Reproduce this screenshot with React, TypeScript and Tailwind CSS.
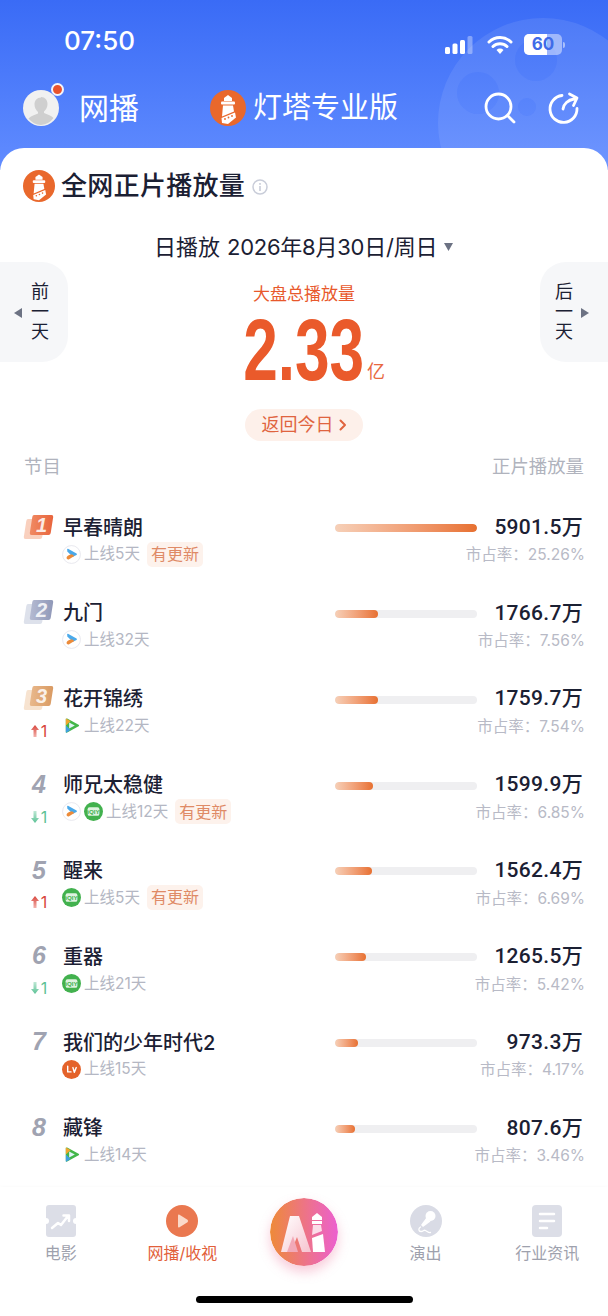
const rows = [
  { name: '早春晴朗', platforms: ['youku'], days: '上线5天', fresh: true, value: '5901.5万', share: '市占率：25.26%', bar: 100, rank: 1, change: '' },
  { name: '九门', platforms: ['youku'], days: '上线32天', fresh: false, value: '1766.7万', share: '市占率：7.56%', bar: 30, rank: 2, change: '' },
  { name: '花开锦绣', platforms: ['tencent'], days: '上线22天', fresh: false, value: '1759.7万', share: '市占率：7.54%', bar: 30, rank: 3, change: 'up' },
  { name: '师兄太稳健', platforms: ['youku', 'iqiyi'], days: '上线12天', fresh: true, value: '1599.9万', share: '市占率：6.85%', bar: 27, rank: 4, change: 'down' },
  { name: '醒来', platforms: ['iqiyi'], days: '上线5天', fresh: true, value: '1562.4万', share: '市占率：6.69%', bar: 26, rank: 5, change: 'up' },
  { name: '重器', platforms: ['iqiyi'], days: '上线21天', fresh: false, value: '1265.5万', share: '市占率：5.42%', bar: 22, rank: 6, change: 'down' },
  { name: '我们的少年时代2', platforms: ['mango'], days: '上线15天', fresh: false, value: '973.3万', share: '市占率：4.17%', bar: 16, rank: 7, change: '' },
  { name: '藏锋', platforms: ['tencent'], days: '上线14天', fresh: false, value: '807.6万', share: '市占率：3.46%', bar: 14, rank: 8, change: '' },
]

const badgeColors: Record<number, [string, string, string]> = {
  1: ['#f7c4ae', '#f08a63', '#e8643c'],
  2: ['#d5d9e6', '#b5bbd2', '#9098b8'],
  3: ['#f5dcc4', '#e9b98d', '#d99a62'],
}

function LighthouseLogo({ size }: { size: number }) {
  return (
    <svg width={size} height={size} viewBox="0 0 36 36" className="shrink-0">
      <circle cx="18" cy="18" r="18" fill="#e9682c" />
      <path d="M18 5l4 3v3h-8V8z" fill="#fff" />
      <rect x="11" y="11.500" width="14" height="3" rx="1" fill="#fff" />
      <path d="M13 15.500h10l1 6-12 5z" fill="#fff" />
      <path d="M11.500 28l13.500-5.500 1 5-8 6.500-6-1z" fill="#fff" />
      <circle cx="15" cy="29" r="0.9" fill="#e9682c" />
      <circle cx="18.500" cy="27.500" r="0.9" fill="#e9682c" />
      <circle cx="22" cy="26" r="0.9" fill="#e9682c" />
    </svg>
  )
}

function PlatformIcon({ kind }: { kind: string }) {
  if (kind === 'youku') {
    return (
      <svg width="19" height="19" viewBox="0 0 20 20" className="shrink-0">
        <circle cx="10" cy="10" r="9.400" fill="#fff" stroke="#e0e1e8" strokeWidth="0.8" />
        <path d="M5.500 4.500q0-.8.8-.6l9 5q1 .8 0 1.500l-4 2-5.800-5.500z" fill="#4aa9ea" />
        <path d="M4.800 13.500c0-2 3-3.500 5.700-3.800l2.500 1.800-5.500 3.500c-1.200.6-2.700 0-2.700-1.500z" fill="#ec8b3a" />
      </svg>
    )
  }
  if (kind === 'tencent') {
    return (
      <svg width="19" height="19" viewBox="0 0 20 20" className="shrink-0">
        <path d="M5 3.500l12 6.500-12 6.500z" fill="#43b649" stroke="#43b649" strokeWidth="2" strokeLinejoin="round" />
        <path d="M4 2.500q3 1 5 3l-5 4.500z" fill="#f0a52e" />
        <path d="M4 10l5 4.500q-2 2-5 3z" fill="#3f9fe0" />
        <path d="M7.500 6.800l6 3.200-6 3.200z" fill="#dff3f5" />
      </svg>
    )
  }
  if (kind === 'iqiyi') {
    return (
      <svg width="19" height="19" viewBox="0 0 20 20" className="shrink-0">
        <circle cx="10" cy="10" r="10" fill="#42b14e" />
        <rect x="3.800" y="5.500" width="12.400" height="9" rx="2" fill="#dff2e0" />
        <text x="10" y="12.600" textAnchor="middle" fontSize="6.500" fontWeight="700" fontFamily="Liberation Sans" fill="#42b14e">iQIY</text>
      </svg>
    )
  }
  return (
    <svg width="19" height="19" viewBox="0 0 20 20" className="shrink-0">
      <circle cx="10" cy="10" r="10" fill="#e4622a" />
      <path d="M6 6.500v6h3.500M11.500 8l1.500 5 2-5" fill="none" stroke="#fff" strokeWidth="1.500" strokeLinecap="round" strokeLinejoin="round" />
    </svg>
  )
}

function RankBadge({ rank }: { rank: number }) {
  const [back, from, to] = badgeColors[rank]
  return (
    <svg width="32" height="27" viewBox="0 0 32 27" className="shrink-0">
      <defs>
        <linearGradient id={`rank${rank}`} x1="0" x2="1" y1="0" y2="0">
          <stop offset="0" stopColor={from} />
          <stop offset="1" stopColor={to} />
        </linearGradient>
      </defs>
      <path d="M5 5h15q2 0 1.700 2l-2.500 16q-.3 2-2.200 2H2.500q-2 0-1.700-2l2.500-16q.3-2 1.700-2z" fill={back} opacity="0.8" />
      <path d="M11 1h17.500q2 0 1.700 2l-2.500 16q-.3 2-2.200 2H8.500q-2 0-1.700-2l2.500-16q.3-2 1.700-2z" fill={`url(#rank${rank})`} />
      <text x="18.500" y="18" textAnchor="middle" fontSize="20" fontWeight="700" fontStyle="italic" fontFamily="Liberation Sans" fill="#fff" fillOpacity="0.85">{rank}</text>
    </svg>
  )
}

function ChangeMark({ dir }: { dir: string }) {
  if (!dir) return null
  const up = dir === 'up'
  return (
    <div className={`flex items-center gap-[2px] text-[16px] leading-[18px] ${up ? 'text-[#d8453c]' : 'text-[#5cc296]'}`}>
      <svg width="8" height="12" viewBox="0 0 8 12">
        <defs>
          <linearGradient id={`chg${dir}`} x1="0" x2="0" y1={up ? '0' : '1'} y2={up ? '1' : '0'}>
            <stop offset="0" stopColor={up ? '#d8453c' : '#5cc296'} />
            <stop offset="1" stopColor={up ? '#f3b3ad' : '#bfe8d5'} />
          </linearGradient>
        </defs>
        <path d={up ? 'M4 0l4 5H5.500v7h-3V5H0z' : 'M4 12l4-5H5.500V0h-3v7H0z'} fill={`url(#chg${dir})`} />
      </svg>
      <span>1</span>
    </div>
  )
}

function Row({ item }: { item: (typeof rows)[number] }) {
  return (
    <div className="flex h-[85.85px] shrink-0">
      <div className="flex w-[63px] flex-col items-center pl-[15px]">
        <div className="flex h-[28px] w-[48px] items-center justify-center">
          {item.rank <= 3 ? (
            <RankBadge rank={item.rank} />
          ) : (
            <span className="font-['Liberation_Sans'] text-[25px] font-bold italic text-[#a0a3b1]">{item.rank}</span>
          )}
        </div>
        <div className="mt-[6px] flex h-[24px] items-center">
          <ChangeMark dir={item.change} />
        </div>
      </div>
      <div className="w-[272px]">
        <div className="flex h-[28px] items-center pt-[1px] text-[20px] font-medium leading-[28px] text-[#1b2033]">{item.name}</div>
        <div className="flex h-[26px] items-center">
          <div className="-ml-[1px] flex gap-[3px]">
            {item.platforms.map((p) => (
              <PlatformIcon key={p} kind={p} />
            ))}
          </div>
          <span className="ml-[3px] text-[15.5px] text-[#b4b7c3]">{item.days}</span>
          {item.fresh && (
            <span className="ml-[7px] flex h-[25px] w-[56px] items-center justify-center rounded-[5px] bg-[#fdf2ec] text-[16px] text-[#df8a66]">有更新</span>
          )}
        </div>
      </div>
      <div className="w-[249px]">
        <div className="flex h-[28px] items-center justify-between">
          <div className="mt-[2px] h-[8px] w-[142px] overflow-hidden rounded-full bg-[#efeff1]">
            <div
              className="h-full rounded-full bg-gradient-to-r from-[#f6d0b8] to-[#e7702f]"
              style={{ width: `${item.bar}%` }}
            />
          </div>
          <span className="mt-[1px] pr-[1px] font-['Roboto','Noto_Sans_CJK_SC',sans-serif] text-[21px] font-medium tracking-[0.3px] text-[#1b2033]">{item.value}</span>
        </div>
        <div className="mt-[1px] -mr-[1px] flex h-[26px] items-center justify-end text-[15.5px] text-[#b8bac6]">{item.share}</div>
      </div>
    </div>
  )
}

function DayTab({ side }: { side: 'left' | 'right' }) {
  const left = side === 'left'
  return (
    <div className={`relative flex h-[100px] w-[68px] items-center justify-center bg-[#f6f7f9] ${left ? 'rounded-r-[26px] pl-[12px]' : 'rounded-l-[26px] pr-[20px]'}`}>
      <div className="flex flex-col items-center text-[18px] leading-[20px] text-[#1b2033]">
        <span>{left ? '前' : '后'}</span>
        <span>一</span>
        <span>天</span>
      </div>
      <svg width="8" height="10" viewBox="0 0 8 10" className={`absolute top-[46px] ${left ? 'left-[14px]' : 'right-[19px]'}`}>
        <path d={left ? 'M8 0v10L0 5z' : 'M0 0v10l8-5z'} fill="#6c7283" />
      </svg>
    </div>
  )
}

function NavItem({ label, active, children }: { label: string; active?: boolean; children: React.ReactNode }) {
  return (
    <div className="flex flex-col items-center">
      <div className="flex h-[36px] items-center justify-center">{children}</div>
      <span className={`mt-[3px] text-[16px] leading-[22px] ${active ? 'text-[#e2603a]' : 'text-[#9ea1ad]'}`}>{label}</span>
    </div>
  )
}

export default function App() {
  return (
    <div className="relative flex h-[1316px] w-[608px] flex-col overflow-hidden bg-gradient-to-b from-[#3a6bf6] to-[#618cff] bg-[length:100%_170px] bg-no-repeat font-['Inter','Noto_Sans_CJK_SC',sans-serif]">
      <svg width="210" height="210" viewBox="0 0 210 210" className="absolute left-[438px] top-[18px]">
        <path
          fillRule="evenodd"
          fill="#fff"
          fillOpacity="0.085"
          d="M105 0a105 105 0 1 0 0 210a105 105 0 1 0 0-210zM98 21a21 21 0 1 0 0 42a21 21 0 1 0 0-42zM40 54a21 21 0 1 0 0 42a21 21 0 1 0 0-42zM89 80a9 9 0 1 0 0 18a9 9 0 1 0 0-18z"
        />
        <g fill="#fff" fillOpacity="0.045">
          <circle cx="98" cy="42" r="21" />
          <circle cx="40" cy="75" r="21" />
          <circle cx="89" cy="89" r="9" />
        </g>
      </svg>

      {/* status bar */}
      <div className="relative flex h-[68px] shrink-0 items-end pb-[12px] pl-[64px] pr-[43px]">
        <span className="text-[26px] font-medium leading-[30px] text-white">07:50</span>
        <div className="ml-auto flex items-center pb-[1px]">
          <svg width="28" height="18" viewBox="0 0 28 18">
            <rect x="0" y="11" width="5" height="7" rx="1.500" fill="#fff" />
            <rect x="7.500" y="7.500" width="5" height="10.500" rx="1.500" fill="#fff" />
            <rect x="15" y="4" width="5" height="14" rx="1.500" fill="#fff" />
            <rect x="22.500" y="0" width="5" height="18" rx="1.500" fill="#fff" fillOpacity="0.35" />
          </svg>
          <svg width="26" height="20" viewBox="0 0 26 20" className="ml-[14px]">
            <path d="M2 7a16 16 0 0 1 22 0M6 11.500a10 10 0 0 1 14 0" fill="none" stroke="#fff" strokeWidth="3" strokeLinecap="round" />
            <path d="M9.500 15a5 5 0 0 1 7 0L13 19z" fill="#fff" />
          </svg>
          <div className="relative ml-[11px] flex h-[21px] w-[38px] items-center justify-center overflow-hidden rounded-[5px] bg-white/45">
            <div className="absolute inset-y-0 left-0 w-[23px] bg-white" />
            <span className="relative text-[17px] font-bold leading-none text-[#3f6be8]">60</span>
          </div>
          <div className="ml-[1px] h-[6px] w-[2px] rounded-r bg-white/50" />
        </div>
      </div>

      {/* top nav */}
      <div className="relative flex h-[80px] shrink-0 items-center pl-[23px]">
        <div className="relative h-[36px] w-[36px]">
          <svg width="36" height="36" viewBox="0 0 36 36">
            <circle cx="18" cy="18" r="18" fill="#f1f1f1" />
            <path d="M18 7c4 0 6.500 3 6.500 7 0 3-1.500 6-3.500 7.500v1.500c3 1.500 7 2 9.500 5A17 17 0 0 1 18 35a17 17 0 0 1-12.500-6.500c2.500-3 6.500-3.500 9.500-5v-1.500c-2-1.500-3.500-4.500-3.500-7.500 0-4 2.500-7 6.500-7z" fill="#cfcfcf" />
          </svg>
          <div className="absolute -right-[5px] -top-[7px] h-[13px] w-[13px] rounded-full border-2 border-[#f3f5fb] bg-[#e9532d]" />
        </div>
        <span className="ml-[20px] text-[30px] leading-[36px] text-white">网播</span>
        <div className="ml-[71px] flex items-center">
          <LighthouseLogo size={36} />
          <span className="ml-[7px] text-[29px] leading-[36px] text-white">灯塔专业版</span>
        </div>
        <svg width="34" height="34" viewBox="0 0 34 34" className="ml-[85px]">
          <circle cx="15.500" cy="15.500" r="12.500" fill="none" stroke="#fff" strokeWidth="2.800" />
          <path d="M25 25l6 6" fill="none" stroke="#fff" strokeWidth="2.800" strokeLinecap="round" />
        </svg>
        <svg width="34" height="34" viewBox="0 0 34 34" className="ml-[30px]">
          <path d="M15 4.500a13.500 13.500 0 1 0 15 13" fill="none" stroke="#fff" strokeWidth="2.800" strokeLinecap="round" />
          <path d="M16 18c.5-5 5-9 11-10M22.500 3l7.500 4-3.500 7.500" fill="none" stroke="#fff" strokeWidth="2.800" strokeLinecap="round" strokeLinejoin="round" />
        </svg>
      </div>

      {/* card */}
      <div className="relative flex min-h-0 flex-1 flex-col rounded-t-[24px] bg-white">
        <div className="mt-[22px] flex h-[32px] shrink-0 items-center pl-[23px]">
          <LighthouseLogo size={32} />
          <span className="ml-[6px] text-[26px] font-medium leading-[32px] tracking-[0.3px] text-[#1b2033]">全网正片播放量</span>
          <svg width="16" height="16" viewBox="0 0 16 16" className="ml-[7px] mt-[2px]">
            <circle cx="8" cy="8" r="7" fill="none" stroke="#c9cdd9" strokeWidth="1.500" />
            <rect x="7.200" y="7" width="1.600" height="5" fill="#c9cdd9" />
            <rect x="7.200" y="4" width="1.600" height="1.800" fill="#c9cdd9" />
          </svg>
        </div>

        <div className="mt-[30px] flex h-[30px] shrink-0 items-center pl-[154px] text-[22px] leading-[30px] text-[#1b2033]">
          <span>日播放</span>
          <span className="ml-[7px] tracking-[-0.25px]">2026年8月30日/周日</span>
          <svg width="9" height="8" viewBox="0 0 9 8" className="ml-[7px]">
            <path d="M0 0h9L4.500 8z" fill="#6c7283" />
          </svg>
        </div>

        <div className="flex h-[100px] shrink-0 items-start justify-between">
          <DayTab side="left" />
          <div className="flex flex-col items-center pt-[20px]">
            <span className="text-[17px] leading-[24px] text-[#e8582c]">大盘总播放量</span>
            <div className="relative mt-[12px] flex h-[64px] w-[118px] items-center justify-center">
              <span className="block origin-center scale-x-[0.715] whitespace-nowrap font-['Liberation_Sans'] text-[87px] font-bold leading-[64px] text-[#ea5a2b]">2.33</span>
              <span className="absolute -right-[22px] -bottom-[1px] text-[18px] leading-[22px] text-[#e8683f]">亿</span>
            </div>
          </div>
          <DayTab side="right" />
        </div>

        <div className="mt-[47px] flex shrink-0 justify-center">
          <div className="flex h-[32px] w-[118px] items-center justify-center rounded-full bg-[#fdf0ea] text-[18px] leading-[32px] text-[#e0643f]">
            <span>返回今日</span>
            <svg width="8" height="12" viewBox="0 0 8 12" className="ml-[5px]">
              <path d="M1.500 1.500L6 6l-4.500 4.500" fill="none" stroke="#e0643f" strokeWidth="2" strokeLinecap="round" strokeLinejoin="round" />
            </svg>
          </div>
        </div>

        <div className="mt-[13px] flex h-[24px] shrink-0 items-center justify-between px-[24px] text-[18.4px] leading-[24px] text-[#b0b3bd]">
          <span>节目</span>
          <span>正片播放量</span>
        </div>

        <div className="mt-[35px] flex min-h-0 flex-1 flex-col overflow-hidden">
          {rows.map((item) => (
            <Row key={item.rank} item={item} />
          ))}
        </div>

        {/* bottom nav */}
        <div className="relative grid h-[129px] shrink-0 grid-cols-5 bg-white pt-[16px] shadow-[0_-1px_3px_rgba(0,0,0,0.02)]">
          <NavItem label="电影">
            <svg width="30" height="34" viewBox="0 0 30 34">
              <path d="M3 1h24a3 3 0 0 1 3 3v10a3 3 0 0 0 0 6v10a3 3 0 0 1-3 3H3a3 3 0 0 1-3-3V20a3 3 0 0 0 0-6V4a3 3 0 0 1 3-3z" fill="#dcdee7" />
              <path d="M6 24l6-5 3 2 7-9M17.500 11.500h5.500v5.500" fill="none" stroke="#fff" strokeWidth="2.500" strokeLinecap="round" strokeLinejoin="round" />
            </svg>
          </NavItem>
          <NavItem label="网播/收视" active>
            <svg width="32" height="32" viewBox="0 0 32 32">
              <circle cx="16" cy="16" r="16" fill="#ea7850" />
              <path d="M12 10.500q0-1.500 1.500-.8l8 5q1.300 1.300 0 2.600l-8 5q-1.500.7-1.500-.8z" fill="#fbd9c9" />
            </svg>
          </NavItem>
          <div className="flex justify-center">
            <div className="-mt-[5px] h-[68px] w-[68px]">
              <svg width="68" height="68" viewBox="0 0 68 68" className="rounded-full shadow-[0_6px_12px_rgba(236,110,150,0.35)]">
                <defs>
                  <linearGradient id="centerBtn" x1="0" x2="1" y1="0" y2="0">
                    <stop offset="0" stopColor="#ee8a38" />
                    <stop offset="1" stopColor="#ec5fd0" />
                  </linearGradient>
                  <linearGradient id="centerA" x1="0" x2="1" y1="0" y2="1">
                    <stop offset="0" stopColor="#fff" />
                    <stop offset="1" stopColor="#f6c3cf" />
                  </linearGradient>
                </defs>
                <circle cx="34" cy="34" r="34" fill="url(#centerBtn)" />
                <path d="M20 18h9l12 36h-9l-5-15-6 15h-10z" fill="url(#centerA)" />
                <path d="M23 38l5 16h-11z" fill="#f2a9b8" />
                <path d="M47 15l5 4v3h-10v-3z" fill="#fff" />
                <rect x="42" y="23" width="10" height="3" fill="#fff" />
                <path d="M43 27h8l1 6-10 4z" fill="#fbdde8" />
                <path d="M42 40l11-4 2 18H43z" fill="#fff" />
              </svg>
            </div>
          </div>
          <NavItem label="演出">
            <svg width="32" height="32" viewBox="0 0 32 32">
              <circle cx="16" cy="16" r="16" fill="#d9dbe5" />
              <circle cx="20.500" cy="11" r="5" fill="#fff" />
              <path d="M16.500 12.500l4 4-7.500 5.500-2-2z" fill="#fff" />
              <path d="M10.500 22c-2.500 1.500-2 4.500.5 4.500s2.500-2 4.500-1 3 2.500 5 2" fill="none" stroke="#fff" strokeWidth="1.300" strokeLinecap="round" />
            </svg>
          </NavItem>
          <NavItem label="行业资讯">
            <svg width="30" height="34" viewBox="0 0 30 34">
              <rect x="0" y="1" width="30" height="32" rx="4" fill="#dcdee7" />
              <path d="M8 10h14M8 17h14M8 24h7" stroke="#fff" strokeWidth="2.500" strokeLinecap="round" />
            </svg>
          </NavItem>
          <div className="absolute bottom-[13px] left-[196px] h-[7px] w-[217px] rounded-full bg-black" />
        </div>
      </div>
    </div>
  )
}
